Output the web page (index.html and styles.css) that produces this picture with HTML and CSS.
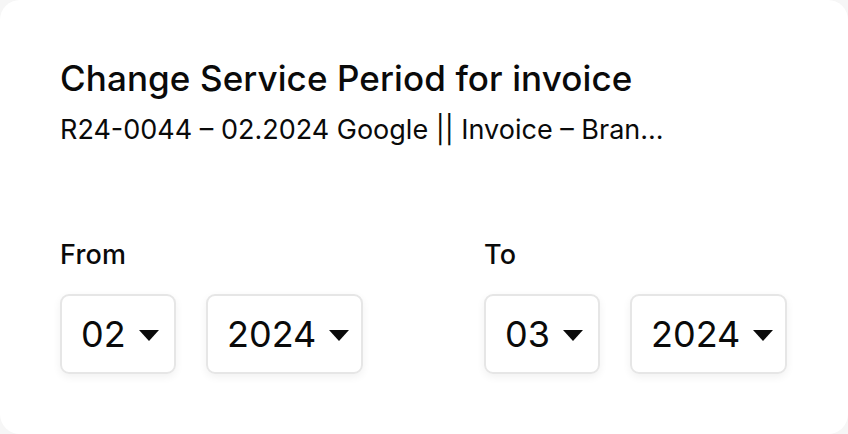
FILE: index.html
```html
<!DOCTYPE html>
<html>
<head>
<meta charset="utf-8">
<link rel="stylesheet" href="styles.css">
</head>
<body>
<div class="card">
  <h1 class="title">Change Service Period for invoice</h1>
  <p class="subtitle">R24-0044 – 02.2024 Google || Invoice – Bran...</p>
  <div class="periods">
    <div class="period">
      <div class="label">From</div>
      <div class="selects">
        <div class="select month"><span>02</span><span class="caret"></span></div>
        <div class="select year"><span>2024</span><span class="caret"></span></div>
      </div>
    </div>
    <div class="period">
      <div class="label">To</div>
      <div class="selects">
        <div class="select month"><span>03</span><span class="caret"></span></div>
        <div class="select year"><span>2024</span><span class="caret"></span></div>
      </div>
    </div>
  </div>
</div>
</body>
</html>
```
FILE: styles.css
```css
html, body {
  margin: 0;
  padding: 0;
  background: #f6f6f6;
}
body {
  font-family: Inter, "Noto Sans", sans-serif;
  color: #0a0a0a;
}
.card {
  box-sizing: border-box;
  width: 848px;
  height: 434px;
  background: #fff;
  border-radius: 20px;
  padding: 56px 60px 0 60px;
}
.title {
  margin: 0;
  font-size: 35px;
  font-weight: 500;
  line-height: 44px;
  letter-spacing: 0.1px;
}
.subtitle {
  margin: 13px 0 0 0;
  font-size: 27px;
  font-weight: 400;
  line-height: 34px;
}
.periods {
  display: flex;
  gap: 90px;
  margin-top: 91px;
}
.period {
  flex: none;
  width: 334px;
}
.label {
  font-size: 27px;
  font-weight: 500;
  line-height: 34px;
  letter-spacing: 0.2px;
}
.selects {
  display: flex;
  gap: 30px;
  margin-top: 22px;
}
.select {
  box-sizing: border-box;
  height: 80px;
  border: 2px solid #e6e6e6;
  border-radius: 9px;
  box-shadow: 0 3px 8px rgba(0,0,0,0.06);
  display: flex;
  align-items: center;
  padding-left: 19px;
  gap: 13px;
  font-size: 36px;
  font-weight: 400;
  line-height: 44px;
}
.select.month { width: 116px; }
.select.year { width: 157px; }
.caret {
  width: 0;
  height: 0;
  border-left: 10px solid transparent;
  border-right: 10px solid transparent;
  border-top: 11px solid #0a0a0a;
  margin-top: 2px;
}
```
